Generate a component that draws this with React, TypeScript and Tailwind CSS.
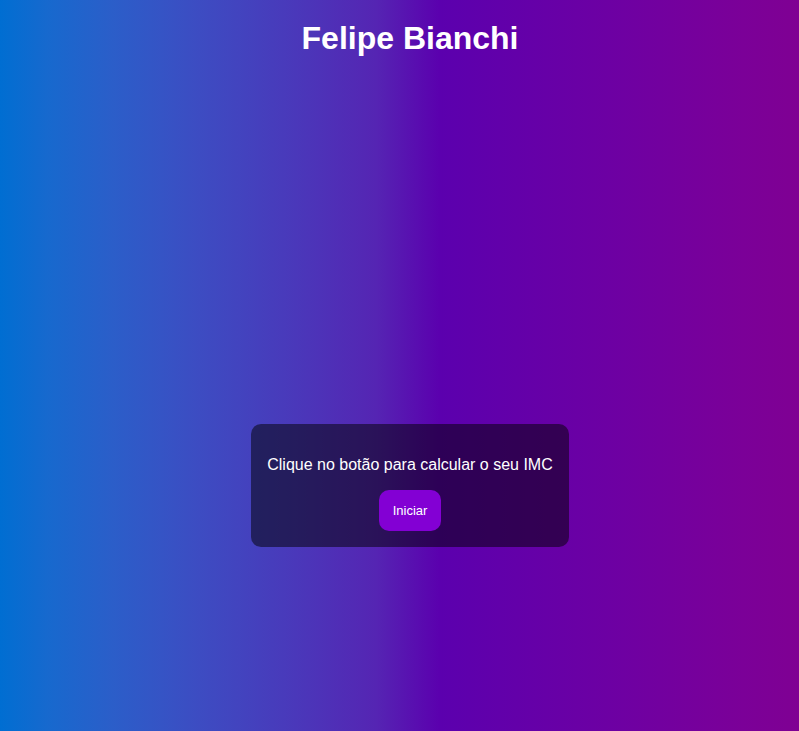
export default function App() {
  return (
    <div className="flex min-h-screen flex-col bg-[linear-gradient(90deg,#006ed2_0%,#1769ce_6%,#2b5ec9_14%,#3d4cc2_25%,#4a38ba_37%,#5525b3_47%,#5b00ae_55%,#6e00a2_78%,#7b0098_93%,#7f0093_100%)] pl-[21px] font-['Liberation_Sans',Arial,sans-serif] text-white">
      <header className="pt-5 text-center">
        <h1 className="text-[32px] leading-9 font-bold">Felipe Bianchi</h1>
      </header>
      <main className="mt-46 flex flex-1 items-center justify-center">
        <section className="flex flex-col items-center rounded-[10px] bg-black/50 px-4 pt-8 pb-4">
          <p className="mb-4 text-base leading-[18px]">Clique no botão para calcular o seu IMC</p>
          <button type="button" className="h-[41px] w-[62px] rounded-[10px] bg-[#8300d4] text-center text-[13px]">Iniciar</button>
        </section>
      </main>
    </div>
  );
}
